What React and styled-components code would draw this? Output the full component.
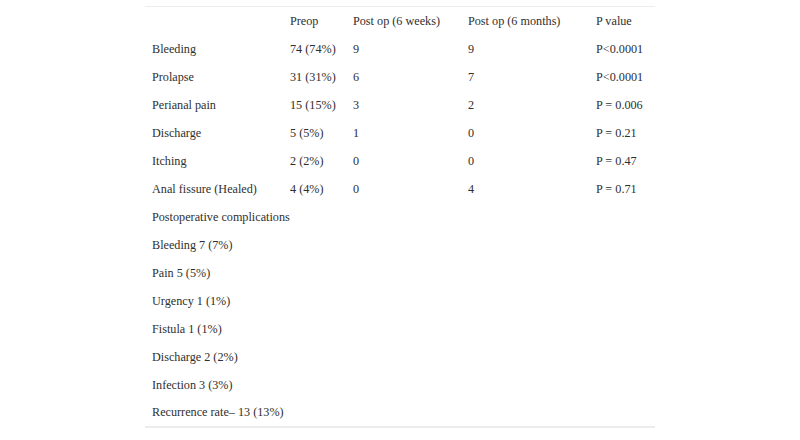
import React from "react";
import styled, { createGlobalStyle } from "styled-components";

const GlobalStyle = createGlobalStyle`
  html, body {
    margin: 0;
    padding: 0;
    background: #ffffff;
  }
  body {
    font-family: "Liberation Serif", "Times New Roman", serif;
    color: #2f2f2f;
  }
`;

const Page = styled.div`
  width: 800px;
  height: 440px;
  padding: 6px 0 0 145px;
  box-sizing: border-box;
`;

const Table = styled.table`
  width: 510px;
  table-layout: fixed;
  border-collapse: collapse;
  border-top: 1px solid #ececec;
  border-bottom: 2px solid #ececec;
  font-size: 12.2px;
`;

const Col = styled.col`
  width: ${({ w }) => w};
`;

const Row = styled.tr`
  height: 28px;
`;

const Cell = styled.td`
  padding: 0 0 0 7px;
  line-height: 14px;
  vertical-align: middle;
  text-align: left;
  white-space: nowrap;
`;

const header = ["", "Preop", "Post op (6 weeks)", "Post op (6 months)", "P value"];
const widths = ["138px", "63px", "115px", "128px", "66px"];

const rows = [
  ["Bleeding", "74 (74%)", "9", "9", "P<0.0001"],
  ["Prolapse", "31 (31%)", "6", "7", "P<0.0001"],
  ["Perianal pain", "15 (15%)", "3", "2", "P = 0.006"],
  ["Discharge", "5 (5%)", "1", "0", "P = 0.21"],
  ["Itching", "2 (2%)", "0", "0", "P = 0.47"],
  ["Anal fissure (Healed)", "4 (4%)", "0", "4", "P = 0.71"],
];

const notes = [
  "Postoperative complications",
  "Bleeding 7 (7%)",
  "Pain 5 (5%)",
  "Urgency 1 (1%)",
  "Fistula 1 (1%)",
  "Discharge 2 (2%)",
  "Infection 3 (3%)",
  "Recurrence rate– 13 (13%)",
];

export default function App() {
  return (
    <>
      <GlobalStyle />
      <Page>
        <Table>
          <colgroup>
            {widths.map((w, i) => (
              <Col key={i} w={w} />
            ))}
          </colgroup>
          <tbody>
            <Row>
              {header.map((h, i) => (
                <Cell key={i}>{h}</Cell>
              ))}
            </Row>
            {rows.map((r) => (
              <Row key={r[0]}>
                {r.map((c, i) => (
                  <Cell key={i}>{c}</Cell>
                ))}
              </Row>
            ))}
            {notes.map((n) => (
              <Row key={n}>
                <Cell>{n}</Cell>
                <Cell />
                <Cell />
                <Cell />
                <Cell />
              </Row>
            ))}
          </tbody>
        </Table>
      </Page>
    </>
  );
}
